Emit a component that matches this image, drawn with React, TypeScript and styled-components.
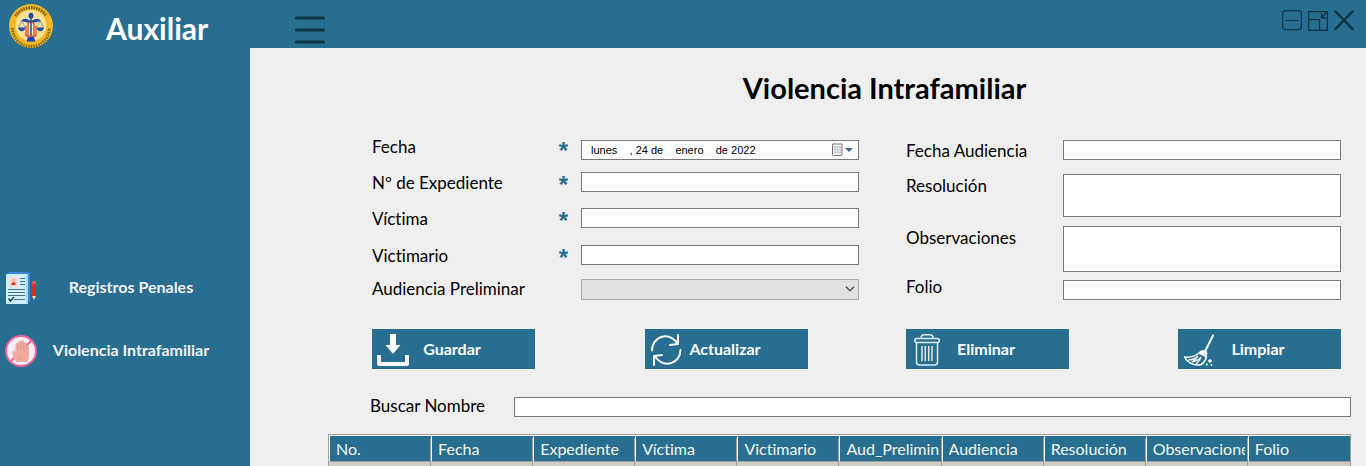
import React from "react";
import styled, { createGlobalStyle } from "styled-components";

const blue = "#286e91";
const dark = "#0f3346";
const fontStack = `"Century Gothic", Lato, "Liberation Sans", sans-serif`;

const GlobalStyle = createGlobalStyle`
  *, *::before, *::after { box-sizing: border-box; }
  body {
    margin: 0;
    background: #efefef;
    color: #000;
    font-family: ${fontStack};
    font-size: 17px;
    line-height: 22px;
    font-variant-ligatures: none;
  }
  button, input, select, textarea { font: inherit; margin: 0; border-radius: 0; }
  svg { display: block; }
`;

const Shell = styled.div`
  display: flex;
  flex-direction: column;
  height: 100vh;
  overflow: hidden;
`;

const TopBar = styled.header`
  display: flex;
  flex: none;
  align-items: center;
  height: 48px;
  padding-right: 12px;
  background: ${blue};
`;

const Brand = styled.div`
  display: flex;
  align-items: flex-end;
  gap: 53px;
  width: 295px;
  height: 100%;
  padding-left: 9px;
`;

const BrandName = styled.span`
  align-self: center;
  padding-top: 8px;
  color: #fff;
  font-size: 30px;
  font-weight: 700;
  line-height: 48px;
`;

const IconButton = styled.button`
  padding: 0;
  border: 0;
  background: none;
  color: ${dark};
`;

const MenuButton = styled(IconButton)`
  padding-top: 12px;
`;

const WindowControls = styled.div`
  display: flex;
  gap: 6px;
  margin-left: auto;
  padding-bottom: 7px;
`;

const Body = styled.div`
  display: flex;
  flex: 1;
  min-height: 0;
`;

const Sidebar = styled.nav`
  display: flex;
  flex: none;
  flex-direction: column;
  gap: 31px;
  width: 250px;
  padding: 224px 25px 0 5px;
  background: ${blue};
`;

const NavLink = styled.a`
  display: flex;
  align-items: center;
  height: 32px;
  color: #f2f2f2;
  font-size: 16px;
  font-weight: 700;
  text-decoration: none;

  span { flex: 1; padding-bottom: 2px; text-align: center; }
`;

const Main = styled.main`
  flex: 1;
  min-width: 0;
  padding: 20px 15px 0 78px;
`;

const Title = styled.h1`
  margin: 0 0 28px;
  padding-left: 90px;
  font-size: 29px;
  font-weight: 700;
  line-height: 40px;
  text-align: center;
`;

const Pair = styled.div`
  display: flex;
  margin: 0 10px 29px 44px;
`;

const LeftColumn = styled.div`
  display: grid;
  flex: 1 1 209px;
  grid-template-rows: 36px 36px 37px 33px 22px;
  margin-right: 47px;
`;

const RightColumn = styled.div`
  display: grid;
  flex: 1 1 157px;
  grid-template-rows: 34px 52px 50px 24px;
  padding-top: 4px;
`;

const Row = styled.div<{ $label: number }>`
  display: grid;
  grid-template-columns: ${(p) => p.$label}px 1fr;
  align-content: start;
`;

const TallRow = styled(Row)`
  label { padding-top: 1px; }
`;

const OffsetRow = styled(Row)`
  grid-template-rows: 24px;
  > :last-child { align-self: end; }
`;

const RequiredLabel = styled.label`
  display: flex;
  justify-content: space-between;
  padding-right: 13px;
`;

const Star = styled.span`
  align-self: flex-end;
  height: 20px;
  color: ${blue};
  font-family: "Liberation Sans", sans-serif;
  font-size: 24px;
  font-weight: 700;
  line-height: 22px;
`;

const TextField = styled.input`
  width: 100%;
  height: 20px;
  padding: 0 4px;
  border: 1px solid #7a7a7a;
  outline: 0;
  background: #fff;
  font-size: 14px;
`;

const TextArea = styled.textarea<{ $height: number }>`
  display: block;
  width: 100%;
  height: ${(p) => p.$height}px;
  padding: 2px 4px;
  border: 1px solid #7a7a7a;
  outline: 0;
  background: #fff;
  font-size: 14px;
  resize: none;
`;

const DateBox = styled.div`
  display: flex;
  align-items: center;
  height: 20px;
  padding: 0 5px 0 9px;
  border: 1px solid #7a7a7a;
  background: #fff;
`;

const DateInput = styled.input`
  flex: 1;
  min-width: 0;
  height: 18px;
  padding: 0;
  border: 0;
  outline: 0;
  background: none;
  color: #000;
  font-family: "Liberation Sans", sans-serif;
  font-size: 11px;
`;

const SelectBox = styled.div`
  display: grid;
  align-items: center;

  > * { grid-area: 1 / 1; }
  > svg { z-index: 1; justify-self: end; margin-right: 4px; pointer-events: none; }
`;

const Select = styled.select`
  width: 100%;
  height: 21px;
  border: 1px solid #adadad;
  outline: 0;
  background: #e1e1e1;
  opacity: 1;
  appearance: none;
`;

const ButtonGroup = styled.div<{ $basis: number; $after: number }>`
  display: flex;
  flex: 1 1 ${(p) => p.$basis}px;
  justify-content: space-between;
  margin-right: ${(p) => p.$after}px;
`;

const LeadingButtons = styled(ButtonGroup)`
  justify-content: flex-start;
  gap: 110px;
`;

const Actions = styled(Pair)`
  margin-bottom: 28px;
`;

const ActionButton = styled.button`
  display: grid;
  grid-template-columns: 32px 1fr 32px;
  align-items: center;
  width: 163px;
  height: 40px;
  padding: 0 8px 0 5px;
  border: 0;
  background: ${blue};
  color: #fff;
  font-size: 16px;
  font-weight: 700;
  text-align: center;

  svg { margin-top: 2px; }
`;

const Search = styled.div`
  display: grid;
  grid-template-columns: 144px 1fr;
  height: 20px;
  margin: 0 0 17px 42px;

  label { line-height: 18px; }
`;

const Records = styled.table`
  width: 100%;
  border: 1px solid #a0a0a0;
  border-spacing: 0;
  table-layout: fixed;
`;

const HeadCell = styled.th`
  height: 27px;
  padding: 0 3px 0 6px;
  border-top: 1px solid #fff;
  border-bottom: 1px solid #a0a0a0;
  border-left: 1px solid #fff;
  background: linear-gradient(#a0a0a0, #a0a0a0) right 2px / 1px 22px no-repeat ${blue};
  color: #f4f8ea;
  font-size: 16px;
  font-weight: 400;
  line-height: 22px;
  text-align: left;
  white-space: nowrap;

  span { display: block; overflow: hidden; }

  &:last-child { background: ${blue}; }
`;

const BodyCell = styled.td`
  height: 22px;
  border-right: 1px solid #a0a0a0;
  border-bottom: 1px solid #a0a0a0;
  background: #d0cdc6;

  &:last-child { border-right: 0; }
`;

const Seal = () => (
  <svg width="44" height="44" viewBox="0 0 44 44" role="img" aria-label="Órgano Judicial, Corte Suprema de Justicia">
    <circle cx="22" cy="22" r="22" fill="#f2b822" />
    <path d="M6.500 12a18.500 18.500 0 0 1 31 0" fill="none" stroke="#7d601c" strokeWidth="3" strokeDasharray="1.600 1" />
    <path d="M3.500 24a18.500 18.500 0 0 0 37 0" fill="none" stroke="#8c6c24" strokeWidth="3" strokeDasharray="1.600 1" />
    <circle cx="22" cy="21.500" r="15.500" fill="#f9df96" />
    <circle cx="22" cy="21.500" r="9" fill="#fbeab8" />
    <path d="M12 17q2-3 6-2l4 2 4-2q4-1 6 2l-6 1.500h-8z" fill="#1e4d9c" />
    <ellipse cx="22" cy="11.800" rx="2.500" ry="3" fill="#1e4d9c" />
    <path d="M22 14v18" stroke="#1e4d9c" strokeWidth="1.500" />
    <path d="M13 16.500l-3.500 7M13 16.500l3 7M31 16.500l-3 7M31 16.500l3.500 7" stroke="#7c88a4" strokeWidth=".8" />
    <path d="M9 23.500h7.500q-1 3.800-3.750 3.800t-3.750-3.800zM27.500 23.500h7.500q-1 3.800-3.750 3.800t-3.750-3.800z" fill="#1e4d9c" />
    <path d="M19 31V20.500q0-2 1.800-2M25 31V20.500q0-2-1.800-2M17 32V22M27 32V22M17 32h10" fill="none" stroke="#dd4630" strokeWidth="1.300" />
    <path d="M19 33h6l1.500 4.500h-9z" fill="#173fc0" />
  </svg>
);

const MenuIcon = () => (
  <svg width="30" height="28" viewBox="0 0 30 28" stroke="currentColor" strokeWidth="3" strokeLinecap="round">
    <path d="M1.500 2h27M1.500 14h27M1.500 26h27" />
  </svg>
);

const MinimizeIcon = () => (
  <svg width="20" height="21" viewBox="0 0 20 21" fill="none" stroke="currentColor" strokeWidth="1.200">
    <rect x=".6" y=".6" width="18.800" height="19" rx="3" />
    <path d="M4 10.500h12" />
  </svg>
);

const RestoreIcon = () => (
  <svg width="20" height="21" viewBox="0 0 20 21" fill="none" stroke="currentColor" strokeWidth="1.200">
    <path d="M.6 1.600h18.800v18.800H.6zM.6 9.600h11v10.800" />
    <path d="M18.500 2.500l-5 5M13.500 3.500v4.300h4.300" strokeWidth="1.600" />
  </svg>
);

const CloseIcon = () => (
  <svg width="20" height="21" viewBox="0 0 20 21" stroke="currentColor" strokeWidth="2.500">
    <path d="M.8.800l18.400 18.900M19.200.800L.8 19.700" />
  </svg>
);

const RecordsIcon = () => (
  <svg width="32" height="32" viewBox="0 0 32 32" aria-hidden="true">
    <rect x="3" y="0" width="22" height="30" rx="1.500" fill="#3b86d6" />
    <rect x="1" y="2" width="22" height="30" rx="1" fill="#cdf0fd" />
    <path d="M21 2h2v30h-2z" fill="#a3ddf5" />
    <rect x="4" y="5" width="9" height="10" fill="#fbdcc8" />
    <circle cx="8.500" cy="8.300" r="1.700" fill="#f5b79a" />
    <path d="M6.500 13v-1.500q2-2.500 4 0V13z" fill="#dc3030" />
    <path d="M15 6.500h5M15 9.500h5M15 12.500h5M3 17.500h17M3 20.500h17M3 23.500h17M9 27.500h11" stroke="#4d7383" strokeWidth="1" />
    <path d="M3.500 26.500l2 2.500 3.500-4" fill="none" stroke="#24475a" strokeWidth="1.500" />
    <path d="M27 9h4v3h-4z" fill="#f05a50" />
    <path d="M27 12h4v12h-4z" fill="#d32f2a" />
    <path d="M27 24h4l-2 4z" fill="#f6d0b5" />
  </svg>
);

const StopIcon = () => (
  <svg width="32" height="32" viewBox="0 0 32 32" aria-hidden="true">
    <circle cx="16" cy="16" r="15" fill="#f3eef8" stroke="#fb5f95" strokeWidth="2" />
    <path d="M5.500 26.500l21-21" stroke="#fb5f95" strokeWidth="2" />
    <path d="M12 27c-3-2-4.500-5-4.500-10 0-1.800 2-1.800 3 .5V9q1.300-1.800 2.700 0V7q1.400-2 2.800 0V6q1.400-1.800 2.800 0v2q1.300-1.600 2.600 0v4q1.400-1.500 2.600 0v9q0 4-2.500 6z" fill="#f0ab9c" />
    <path d="M13.200 9v7M16 7v9M18.800 8v8M21.400 11v6M12.500 20q3 1 3 5" fill="none" stroke="#dc8e80" strokeWidth=".6" />
  </svg>
);

const CalendarIcon = () => (
  <svg width="22" height="14" viewBox="0 0 22 14" aria-hidden="true">
    <path d="M2 1h9v11l-2 .5H2.500q-1 0-1-1V2q0-1 1-1z" fill="#fff" stroke="#7b706c" />
    <rect x="3" y="3" width="7" height="7.500" fill="#b9c4d4" />
    <path d="M5.300 3v7.500M7.700 3v7.500M3 5.500h7M3 8h7" stroke="#fff" strokeWidth=".6" />
    <path d="M14 5h8l-4 4z" fill="#44608c" />
  </svg>
);

const ChevronIcon = () => (
  <svg width="10" height="6" viewBox="0 0 10 6" fill="none" stroke="#505050" strokeWidth="1.300">
    <path d="M1 .8l4 4 4-4" />
  </svg>
);

const SaveIcon = () => (
  <svg width="32" height="32" viewBox="0 0 32 32" aria-hidden="true">
    <path d="M13 0h6v11h4.500L16 20 8.500 11H13z" fill="#fff" />
    <path d="M2 21v9h28v-9" fill="none" stroke="#f6f6f8" strokeWidth="4" strokeLinejoin="round" />
  </svg>
);

const RefreshIcon = () => (
  <svg width="32" height="32" viewBox="0 0 32 32" fill="none" stroke="#f6f6f8" strokeWidth="2" strokeLinecap="round" strokeLinejoin="round" aria-hidden="true">
    <path d="M2 16.500C2 3 18-3.500 27.500 9.500M28 1v9l-8 1M30.500 16c0 13-16 19.500-25.500 6.500M4 31v-9l8-1" />
  </svg>
);

const TrashIcon = () => (
  <svg width="32" height="32" viewBox="0 0 32 32" fill="none" stroke="#dfeaf0" strokeWidth="1.500" strokeLinejoin="round" strokeLinecap="round" aria-hidden="true">
    <rect x="3.800" y="4.500" width="24.500" height="4" rx="2" />
    <path d="M10 4.300q0-3.500 3-3.500h6q3 0 3 3.500M5.500 9v19q0 3 3 3h15q3 0 3-3V9M11 12.500v14M14.300 12.500v14M17.700 12.500v14M21 12.500v14" />
  </svg>
);

const BroomIcon = () => (
  <svg width="32" height="32" viewBox="0 0 32 32" aria-hidden="true">
    <path d="M30 1.500l-7.500 15" stroke="#fff" strokeWidth="2" strokeLinecap="round" />
    <path d="M16.500 17.500q3.500-3 7.500 0 .8 1.500 0 4l-8-3z" fill="#fff" />
    <path d="M16 19l7.500 3.500Q22 29 17 31 6 31.500 1.500 23 10 24 16 19z" fill="none" stroke="#fff" strokeWidth="1.500" strokeLinejoin="round" />
    <path d="M5 26q6 0 10-4-2 4-6 6 6-1 9-5-1 4-5 7" fill="none" stroke="#fff" strokeWidth="1.200" />
    <circle cx="27" cy="27" r="1.800" fill="#fff" />
    <circle cx="23.800" cy="30.500" r="1" fill="#fff" />
    <circle cx="28.500" cy="31" r=".9" fill="#fff" />
  </svg>
);

const required = [
  { id: "expediente", label: "Nº de Expediente" },
  { id: "victima", label: "Víctima" },
  { id: "victimario", label: "Victimario" },
];

const columns = [
  "No.", "Fecha", "Expediente", "Víctima", "Victimario",
  "Aud_Preliminar", "Audiencia", "Resolución", "Observaciones", "Folio",
];

export default function App() {
  return (
    <Shell>
      <GlobalStyle />
      <TopBar>
        <Brand>
          <Seal />
          <BrandName>Auxiliar</BrandName>
        </Brand>
        <MenuButton type="button" aria-label="Menú"><MenuIcon /></MenuButton>
        <WindowControls>
          <IconButton type="button" aria-label="Minimizar"><MinimizeIcon /></IconButton>
          <IconButton type="button" aria-label="Restaurar"><RestoreIcon /></IconButton>
          <IconButton type="button" aria-label="Cerrar"><CloseIcon /></IconButton>
        </WindowControls>
      </TopBar>
      <Body>
        <Sidebar>
          <NavLink href="#registros"><RecordsIcon /><span>Registros Penales</span></NavLink>
          <NavLink href="#violencia"><StopIcon /><span>Violencia Intrafamiliar</span></NavLink>
        </Sidebar>
        <Main>
          <Title>Violencia Intrafamiliar</Title>
          <Pair>
            <LeftColumn>
              <OffsetRow $label={209}>
                <RequiredLabel htmlFor="fecha">Fecha<Star>*</Star></RequiredLabel>
                <DateBox>
                  <DateInput id="fecha" defaultValue="lunes    , 24 de    enero    de 2022" />
                  <IconButton type="button" aria-label="Abrir calendario"><CalendarIcon /></IconButton>
                </DateBox>
              </OffsetRow>
              {required.map((f) => (
                <Row key={f.id} $label={209}>
                  <RequiredLabel htmlFor={f.id}>{f.label}<Star>*</Star></RequiredLabel>
                  <TextField id={f.id} />
                </Row>
              ))}
              <Row $label={209}>
                <label htmlFor="preliminar">Audiencia Preliminar</label>
                <SelectBox>
                  <Select id="preliminar" disabled />
                  <ChevronIcon />
                </SelectBox>
              </Row>
            </LeftColumn>
            <RightColumn>
              <Row $label={157}>
                <label htmlFor="audiencia">Fecha Audiencia</label>
                <TextField id="audiencia" />
              </Row>
              <TallRow $label={157}>
                <label htmlFor="resolucion">Resolución</label>
                <TextArea id="resolucion" $height={43} />
              </TallRow>
              <TallRow $label={157}>
                <label htmlFor="observaciones">Observaciones</label>
                <TextArea id="observaciones" $height={46} />
              </TallRow>
              <OffsetRow $label={157}>
                <label htmlFor="folio">Folio</label>
                <TextField id="folio" />
              </OffsetRow>
            </RightColumn>
          </Pair>
          <Actions>
            <LeadingButtons $basis={209} $after={47}>
              <ActionButton type="button"><SaveIcon />Guardar</ActionButton>
              <ActionButton type="button"><RefreshIcon />Actualizar</ActionButton>
            </LeadingButtons>
            <ButtonGroup $basis={157} $after={0}>
              <ActionButton type="button"><TrashIcon />Eliminar</ActionButton>
              <ActionButton type="button"><BroomIcon />Limpiar</ActionButton>
            </ButtonGroup>
          </Actions>
          <Search>
            <label htmlFor="buscar">Buscar Nombre</label>
            <TextField id="buscar" />
          </Search>
          <Records>
            <thead>
              <tr>{columns.map((c) => <HeadCell key={c} scope="col"><span>{c}</span></HeadCell>)}</tr>
            </thead>
            <tbody>
              <tr>{columns.map((c) => <BodyCell key={c} />)}</tr>
            </tbody>
          </Records>
        </Main>
      </Body>
    </Shell>
  );
}
